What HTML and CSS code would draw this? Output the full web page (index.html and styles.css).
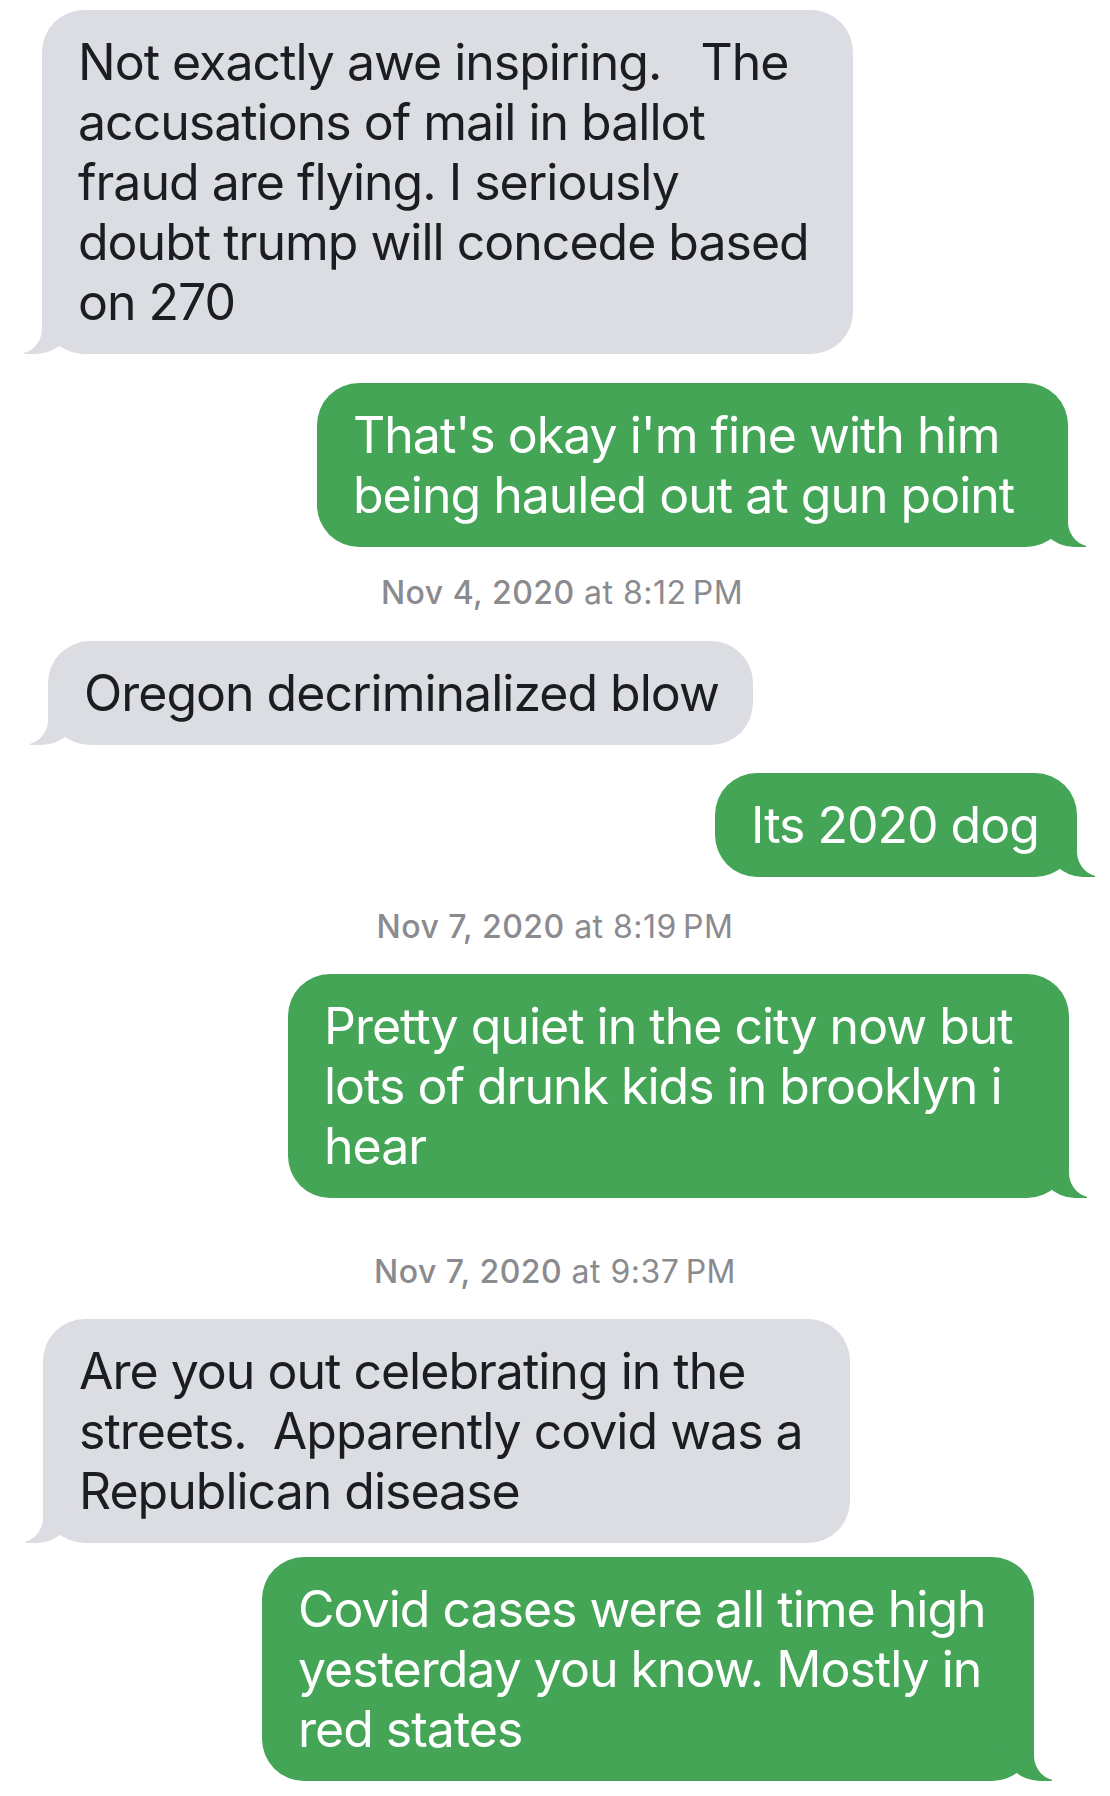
FILE: index.html
```
<!DOCTYPE html>
<html lang="en">
<head>
    <meta charset="UTF-8">
    <meta name="viewport" content="width=device-width, initial-scale=1.0">
    <title>Messages</title>
    <link rel="stylesheet" href="styles.css">
</head>
<body>

    <!-- Conversation -->
    <div class="thread">
        <p class="bubble them b1">Not exactly awe inspiring. &nbsp; The<br>accusations of mail in ballot<br>fraud are flying. I seriously<br>doubt trump will concede based<br>on 270</p>

        <p class="bubble me b2">That's okay i'm fine with him<br>being hauled out at gun point</p>

        <p class="stamp s1"><b>Nov 4, 2020</b> at 8:12&#8239;PM</p>

        <p class="bubble them b3">Oregon decriminalized blow</p>

        <p class="bubble me b4">Its 2020 dog</p>

        <p class="stamp s2"><b>Nov 7, 2020</b> at 8:19&#8239;PM</p>

        <p class="bubble me b5">Pretty quiet in the city now but<br>lots of drunk kids in brooklyn i<br>hear</p>

        <p class="stamp s3"><b>Nov 7, 2020</b> at 9:37&#8239;PM</p>

        <p class="bubble them b6">Are you out celebrating in the<br>streets. &nbsp;Apparently covid was a<br>Republican disease</p>

        <p class="bubble me b7">Covid cases were all time high<br>yesterday you know. Mostly in<br>red states</p>
    </div>

</body>
</html>
```

FILE: styles.css
```
/* Reset and global styling */
* {
    margin: 0;
    padding: 0;
    box-sizing: border-box;
}
body {
    font-family: Inter, 'Noto Sans', 'Liberation Sans', sans-serif;
    background-color: #fff;
    width: 1110px;
    min-height: 1796px;
}

/* Thread */
.thread {
    display: flex;
    flex-direction: column;
    padding-top: 10px;
}

/* Bubbles */
.bubble {
    position: relative;
    font-size: 50px;
    line-height: 60px;
    letter-spacing: -0.02em;
    padding: 22px 20px 22px 36px;
    border-radius: 42px;
    white-space: nowrap;
}
.bubble::before,
.bubble::after {
    content: "";
    position: absolute;
    bottom: 0;
    height: 50px;
}

/* Incoming (grey, left) */
.them {
    background-color: #dcdde2;
    color: #1b1d22;
    align-self: flex-start;
}
.them::before {
    left: -18px;
    width: 50px;
    background-color: #dcdde2;
    border-bottom-right-radius: 38px;
}
.them::after {
    left: -65px;
    width: 65px;
    background-color: #fff;
    border-bottom-right-radius: 25px;
}

/* Outgoing (green, right) */
.me {
    background-color: #44a557;
    color: #fff;
    align-self: flex-start;
}
.me::before {
    right: -18px;
    width: 50px;
    background-color: #44a557;
    border-bottom-left-radius: 38px;
}
.me::after {
    right: -65px;
    width: 65px;
    background-color: #fff;
    border-bottom-left-radius: 25px;
}

/* Per-message placement */
.b1 { margin-left: 42px; width: 811px; }
.b2 { margin: 29px 0 0 317px; width: 751px; }
.b3 { margin: 28px 0 0 48px; width: 705px; }
.b4 { margin: 28px 0 0 715px; width: 362px; }
.b5 { margin: 27px 0 0 288px; width: 781px; }
.b6 { margin: 27px 0 0 43px; width: 807px; }
.b7 { margin: 14px 0 0 262px; width: 772px; }

/* Timestamps */
.stamp {
    font-size: 32px;
    line-height: 40px;
    color: #8a8a8f;
    text-align: center;
    letter-spacing: 0.015em;
}
.stamp b {
    font-weight: 500;
}
.s1 { margin-top: 26px; padding-left: 14px; }
.s2 { margin-top: 30px; }
.s3 { margin-top: 54px; }
```
